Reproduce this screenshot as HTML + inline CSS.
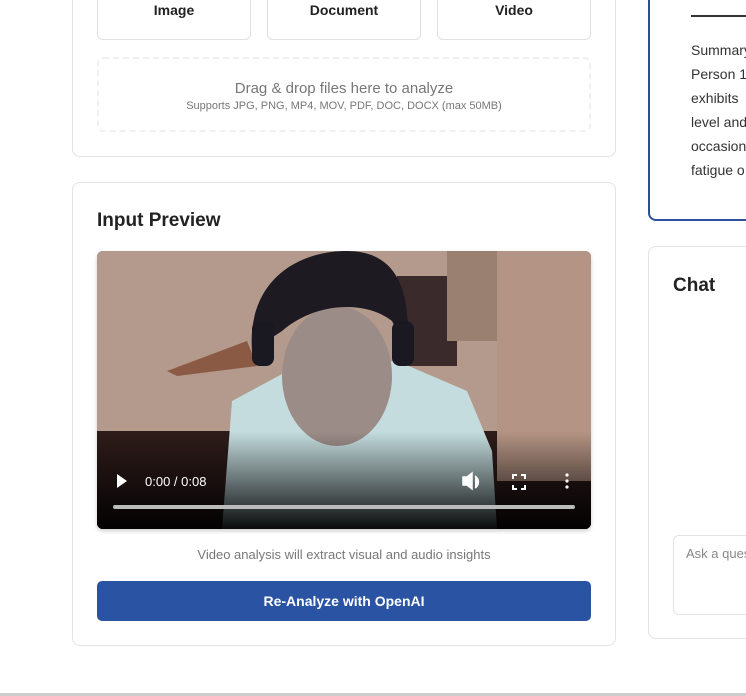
<!DOCTYPE html>
<html><head><meta charset="utf-8"><style>
*{box-sizing:border-box;margin:0;padding:0}
body{width:746px;height:696px;background:#fff;font-family:"Liberation Sans",sans-serif;position:relative;overflow:hidden;color:#222}
.card{position:absolute;border:1px solid #e3e3e3;border-radius:8px;background:#fff}
.btn{position:absolute;top:-10px;height:50px;border:1px solid #e0e0e0;border-radius:6px;text-align:center;font-size:14px;font-weight:bold;padding-top:11px;color:#222}
.abs{position:absolute}
</style></head><body>
<div class="card" style="left:72px;top:-20px;width:544px;height:177px"></div>
<div class="btn" style="left:97px;width:154px">Image</div>
<div class="btn" style="left:267px;width:154px">Document</div>
<div class="btn" style="left:437px;width:154px">Video</div>
<div class="abs" style="left:97px;top:57px;width:494px;height:75px;border:2px dashed #f0f0f0;border-radius:6px;text-align:center">
<div style="font-size:15px;color:#777;margin-top:20px;line-height:20px">Drag &amp; drop files here to analyze</div>
<div style="font-size:11px;color:#777;line-height:14px">Supports JPG, PNG, MP4, MOV, PDF, DOC, DOCX (max 50MB)</div>
</div>
<div class="card" style="left:72px;top:182px;width:544px;height:464px"></div>
<div class="abs" style="left:97px;top:210px;font-size:19px;font-weight:bold;color:#222">Input Preview</div>
<div class="abs" style="left:97px;top:251px;width:494px;height:278px;border-radius:6px;overflow:hidden;background:#000;box-shadow:0 2px 4px rgba(0,0,0,.2)">
<svg width="494" height="278" viewBox="0 0 494 278">
<defs><linearGradient id="g" x1="0" y1="0" x2="0" y2="1"><stop offset="0.65" stop-color="#000" stop-opacity="0"/><stop offset="1" stop-color="#000" stop-opacity="0.95"/></linearGradient></defs>
<rect width="494" height="278" fill="#a88c7c"/>
<rect width="494" height="180" fill="#b39a8c"/>
<rect x="0" y="180" width="494" height="98" fill="#2e1c1a"/>
<rect x="300" y="25" width="60" height="90" fill="#3a2a2c"/>
<rect x="350" y="0" width="50" height="90" fill="#9a8070"/>
<rect x="400" y="0" width="94" height="230" fill="#b49484"/>
<path d="M70 120 L150 90 L160 115 L80 125Z" fill="#8a5a44"/>
<path d="M125 278 L135 150 L200 115 L300 110 L370 140 L395 200 L400 278Z" fill="#c4dcde"/>
<ellipse cx="240" cy="125" rx="55" ry="70" fill="#9c8c88"/>
<path d="M155 100 C150 30 200 0 250 0 C300 0 315 40 310 100 L295 70 C270 50 220 50 185 80Z" fill="#1e1a22"/>
<rect x="155" y="70" width="22" height="45" rx="8" fill="#1a1820"/>
<rect x="295" y="70" width="22" height="45" rx="8" fill="#1a1820"/>
<rect width="494" height="278" fill="url(#g)"/>
<path d="M20 223 L30 230 L20 237Z" fill="#fff"/>
<text x="48" y="235" font-family="Liberation Sans" font-size="13" fill="#fff">0:00 / 0:08</text>
<path d="M366 226 h4 l5-4 v16 l-5-4 h-4z M378 225 a7 7 0 0 1 0 12" fill="#fff" stroke="#fff" stroke-width="1.5"/>
<path d="M416 228 v-4 h4 M424 224 h4 v4 M428 234 v4 h-4 M420 238 h-4 v-4" fill="none" stroke="#fff" stroke-width="2"/>
<circle cx="470" cy="224" r="1.6" fill="#fff"/><circle cx="470" cy="230" r="1.6" fill="#fff"/><circle cx="470" cy="236" r="1.6" fill="#fff"/>
<rect x="16" y="254" width="462" height="4" rx="2" fill="#bbb"/>
</svg></div>
<div class="abs" style="left:97px;top:547px;width:494px;text-align:center;font-size:13px;color:#777">Video analysis will extract visual and audio insights</div>
<div class="abs" style="left:97px;top:581px;width:494px;height:40px;background:#2a53a3;border-radius:5px;color:#fff;font-size:14px;font-weight:bold;text-align:center;line-height:40px">Re-Analyze with OpenAI</div>

<div class="abs" style="left:648px;top:-20px;width:120px;height:241px;border:2px solid #2a4f9b;border-radius:8px"></div>
<div class="abs" style="left:691px;top:15px;width:55px;height:2px;background:#333"></div>
<div class="abs" style="left:691px;top:38px;font-size:14px;line-height:24px;color:#333;white-space:nowrap">Summary<br>Person 1<br>exhibits<br>level and<br>occasional<br>fatigue o</div>
<div class="card" style="left:648px;top:246px;width:120px;height:393px"></div>
<div class="abs" style="left:673px;top:275px;font-size:19px;font-weight:bold;color:#222">Chat</div>
<div class="abs" style="left:673px;top:535px;width:100px;height:80px;border:1px solid #e3e3e3;border-radius:6px;padding:10px 12px;font-size:13px;color:#888;white-space:nowrap">Ask a question</div>
<div class="abs" style="left:0;top:693px;width:746px;height:3px;background:#ccc"></div>
</body></html>
